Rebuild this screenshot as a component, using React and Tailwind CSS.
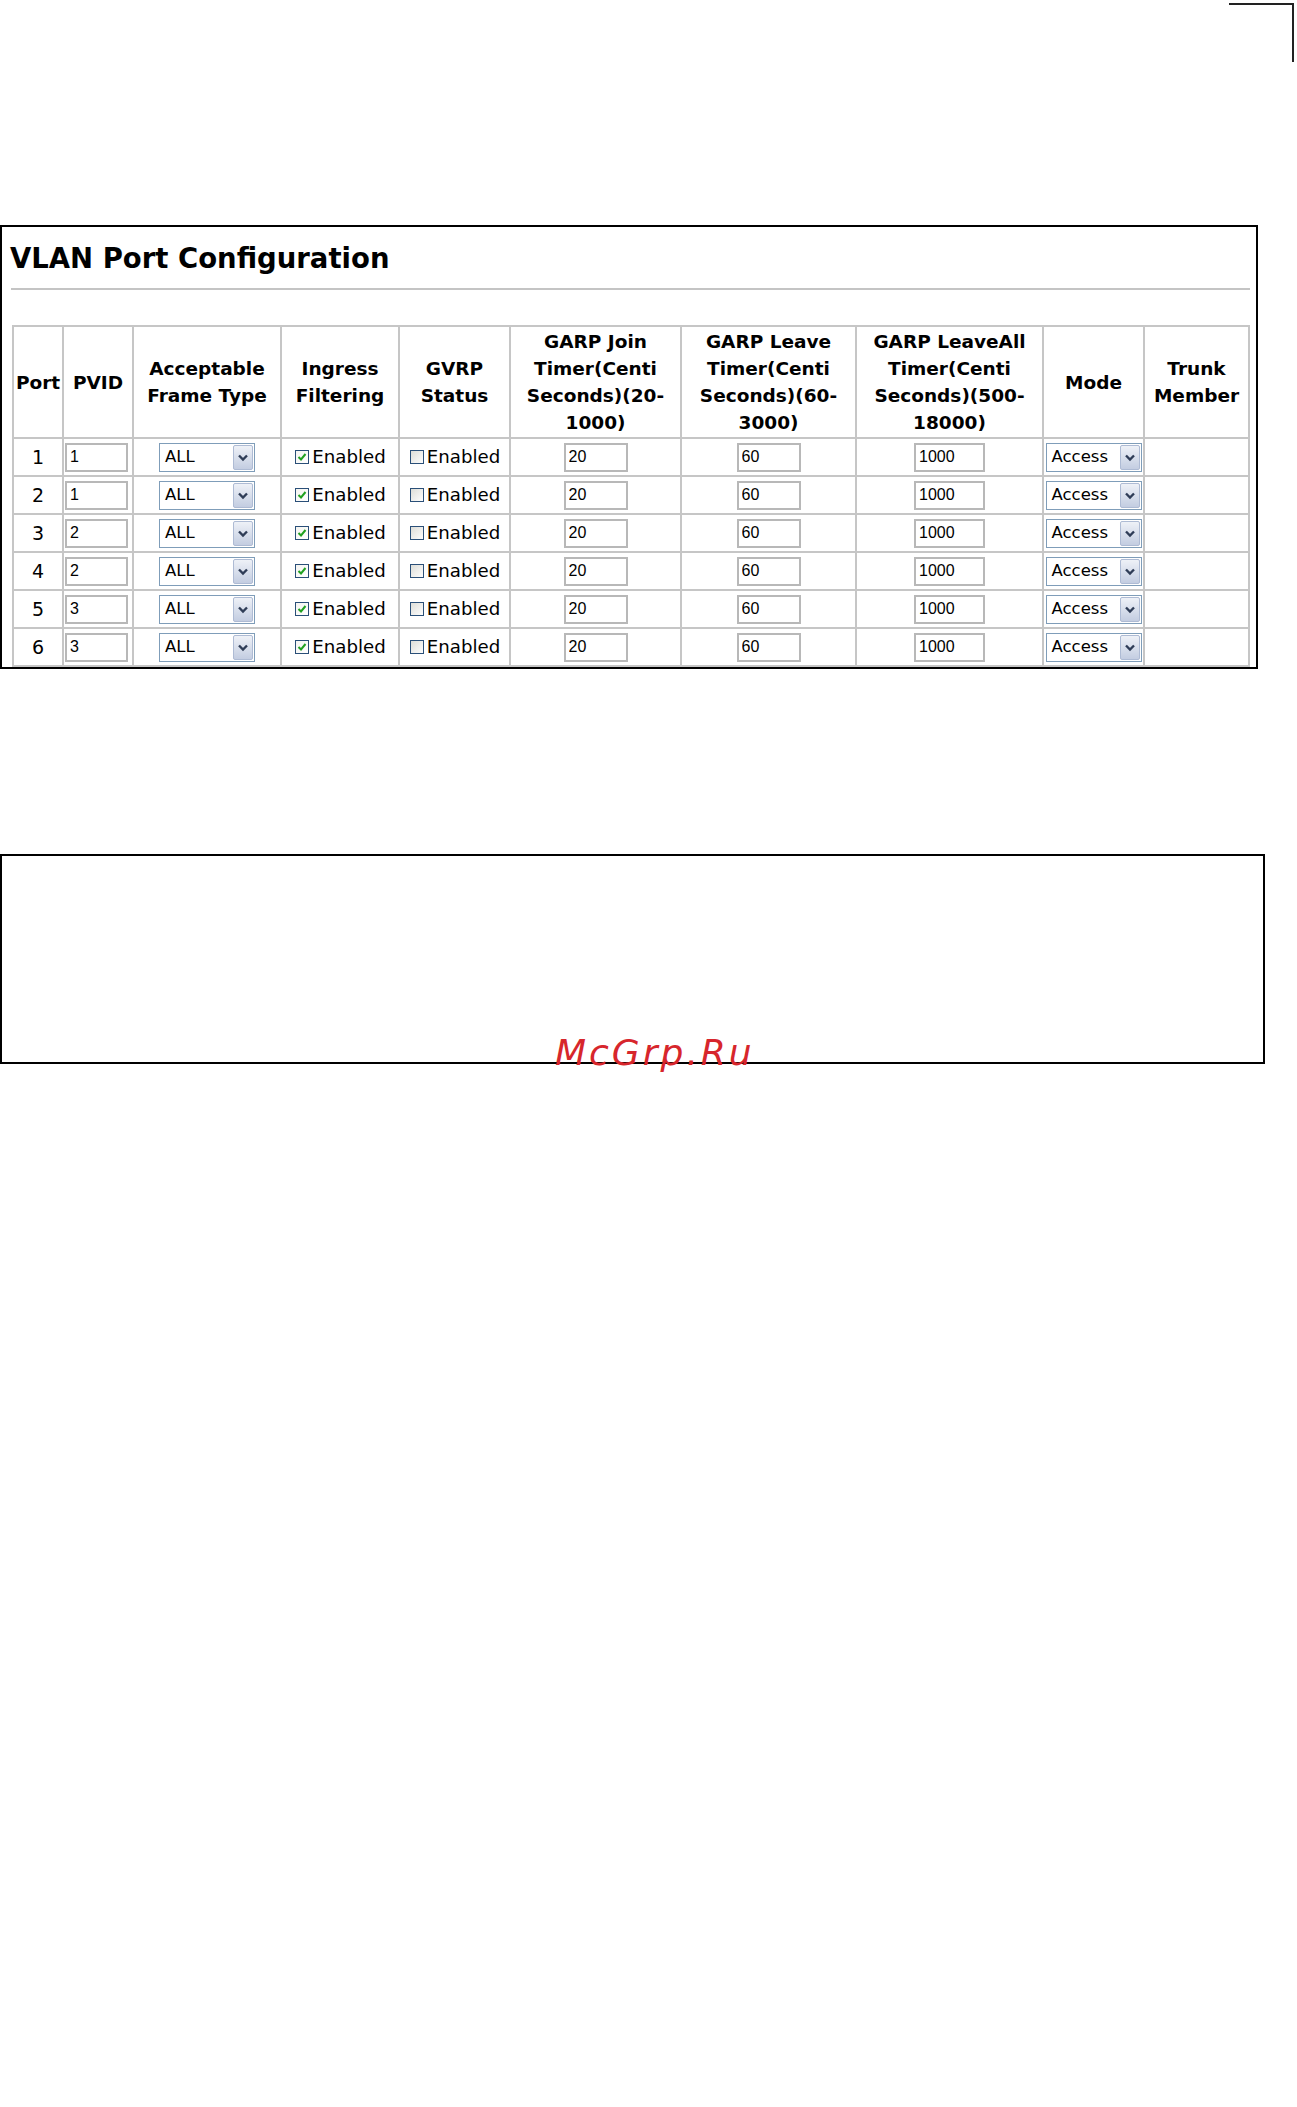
import React from "react";

const rows = [
  { port: 1, pvid: "1" },
  { port: 2, pvid: "1" },
  { port: 3, pvid: "2" },
  { port: 4, pvid: "2" },
  { port: 5, pvid: "3" },
  { port: 6, pvid: "3" },
];

const cols = [50, 70, 148, 118, 111, 171, 175, 187, 101, 105];

function Check({ checked }) {
  return (
    <svg width="16" height="16" viewBox="0 0 16 16" className="shrink-0">
      <defs>
        <linearGradient id={checked ? "cbOn" : "cbOff"} x1="0" y1="0" x2="1" y2="1">
          <stop offset="0" stopColor={checked ? "#f4f4f0" : "#dcdcd6"} />
          <stop offset="1" stopColor="#ffffff" />
        </linearGradient>
      </defs>
      <rect x="1.5" y="1.5" width="13" height="13" fill={`url(#${checked ? "cbOn" : "cbOff"})`} stroke="#2a4f78" strokeWidth="1" />
      {checked && (
        <path d="M4.5 8 L7 10.5 L11.5 5" fill="none" stroke="#21a121" strokeWidth="2" />
      )}
    </svg>
  );
}

function Dropdown({ value, width }) {
  return (
    <div className={`mx-auto flex h-[29px] ${width} items-stretch border border-[#7f9db9] bg-white`}>
      <div className="flex flex-1 items-center pl-[5px] text-[16.5px] text-black" style={{ fontFamily: '"DejaVu Sans", sans-serif' }}>
        {value}
      </div>
      <div className="m-[1px] flex w-[20px] items-center justify-center rounded-[2px] border border-[#aebbd4] bg-gradient-to-b from-[#eef1f7] to-[#c3cde1]">
        <svg width="12" height="9" viewBox="0 0 12 9">
          <path d="M2 2.5 L6 6.5 L10 2.5" fill="none" stroke="#2f3d57" strokeWidth="2.4" />
        </svg>
      </div>
    </div>
  );
}

function TextBox({ value, width, align = "mx-auto" }) {
  return (
    <input
      readOnly
      value={value}
      className={`${align} block h-[29px] ${width} border-2 border-[#b8b8b8] bg-white pl-[3px] text-[16px] text-black outline-none`}
      style={{ fontFamily: '"Liberation Sans", Arial, sans-serif' }}
    />
  );
}

function Enabled({ checked }) {
  return (
    <div className="flex items-center justify-center gap-[2px]">
      <Check checked={checked} />
      <span className="text-[18.2px] leading-none">Enabled</span>
    </div>
  );
}

export default function App() {
  const th = "border-2 border-[#c6c6c6] p-0 text-center align-middle text-[18.5px] font-bold leading-[27px]";
  const td = "border-2 border-[#c6c6c6] p-0 text-center align-middle";

  return (
    <div className="min-h-[2107px] w-[1297px] bg-white text-black" style={{ fontFamily: '"DejaVu Sans", Verdana, sans-serif' }}>
      {/* corner mark */}
      <div className="flex justify-end pr-[3px] pt-[3px]">
        <div className="h-[59px] w-[65px] border-r-2 border-t-2 border-[#222]" />
      </div>

      {/* VLAN port configuration panel */}
      <div className="mt-[163px] w-[1258px] border-2 border-black">
        <h1 className="pl-[8px] pt-[15px] text-[27.5px] font-bold leading-[32px]">VLAN Port Configuration</h1>
        <div className="ml-[9px] mr-[6px] mt-[14px] h-[2px] bg-[#c4c4c4]" />

        <table className="ml-[10px] mt-[35px] w-[1236px] table-fixed border-collapse">
          <colgroup>
            {cols.map((w, i) => (
              <col key={i} style={{ width: w }} />
            ))}
          </colgroup>
          <thead>
            <tr className="h-[112px]">
              <th className={th}>Port</th>
              <th className={th}>PVID</th>
              <th className={th}>Acceptable<br />Frame Type</th>
              <th className={th}>Ingress<br />Filtering</th>
              <th className={th}>GVRP<br />Status</th>
              <th className={th}>GARP Join<br />Timer(Centi<br />Seconds)(20-<br />1000)</th>
              <th className={th}>GARP Leave<br />Timer(Centi<br />Seconds)(60-<br />3000)</th>
              <th className={th}>GARP LeaveAll<br />Timer(Centi<br />Seconds)(500-<br />18000)</th>
              <th className={th}>Mode</th>
              <th className={th}>Trunk<br />Member</th>
            </tr>
          </thead>
          <tbody>
            {rows.map((r) => (
              <tr key={r.port} className="h-[38px]">
                <td className={`${td} text-[19px]`}>{r.port}</td>
                <td className={td}>
                  <TextBox value={r.pvid} width="w-[63px]" align="ml-[1px]" />
                </td>
                <td className={td}>
                  <Dropdown value="ALL" width="w-[96px]" />
                </td>
                <td className={td}>
                  <Enabled checked />
                </td>
                <td className={td}>
                  <Enabled checked={false} />
                </td>
                <td className={td}>
                  <TextBox value="20" width="w-[64px]" />
                </td>
                <td className={td}>
                  <TextBox value="60" width="w-[64px]" />
                </td>
                <td className={td}>
                  <TextBox value="1000" width="w-[71px]" />
                </td>
                <td className={td}>
                  <Dropdown value="Access" width="w-[96px]" />
                </td>
                <td className={td} />
              </tr>
            ))}
          </tbody>
        </table>
      </div>

      {/* empty second panel with watermark */}
      <div className="relative mt-[185px] h-[210px] w-[1265px] border-2 border-black">
        <span
          className="absolute left-[553px] top-[179px] text-[36px] italic leading-[36px] tracking-[3px] text-[#d7262c]"
          style={{ fontFamily: '"DejaVu Sans", sans-serif' }}
        >
          McGrp.Ru
        </span>
      </div>
    </div>
  );
}
